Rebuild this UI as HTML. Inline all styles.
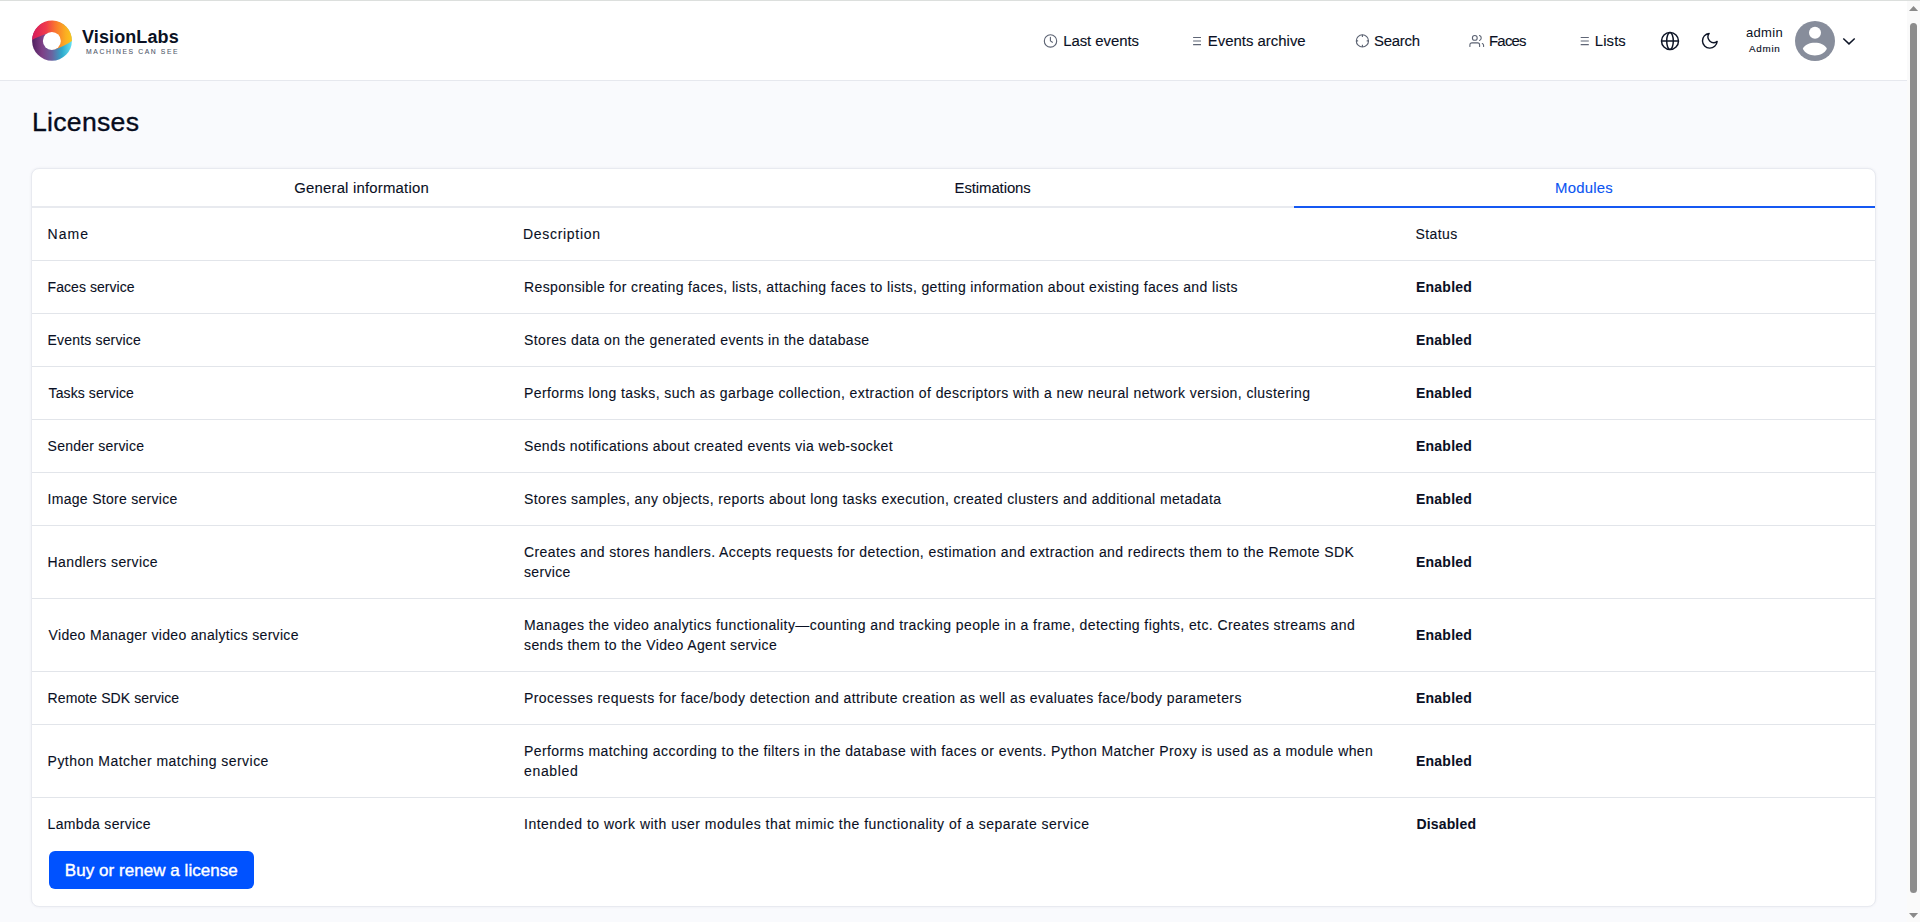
<!DOCTYPE html>
<html><head><meta charset="utf-8">
<style>
html,body{margin:0;padding:0;}
body{width:1920px;height:922px;overflow:hidden;position:relative;background:#f9fafd;font-family:"Liberation Sans",sans-serif;color:#0a1024;}
.a{position:absolute;}
.t{position:absolute;white-space:nowrap;-webkit-text-stroke:0.1px currentColor;}
</style></head><body>
<div class="a" style="left:0;top:0;width:1920px;height:1px;background:#dcdfdd"></div>
<div class="a" style="left:0;top:1px;width:1907px;height:79px;background:#fff;border-bottom:1px solid #e6e8ee"></div>
<svg class="a" style="left:32px;top:20px" width="40" height="42" viewBox="0 0 40 42">
<defs>
<linearGradient id="gt" x1="0" y1="0" x2="1" y2="0"><stop offset="0" stop-color="#d61a5c"/><stop offset="0.35" stop-color="#f03a4b"/><stop offset="0.6" stop-color="#fa7a2d"/><stop offset="0.85" stop-color="#fbb021"/><stop offset="1" stop-color="#fcc41c"/></linearGradient>
<linearGradient id="gb" x1="0" y1="0" x2="1" y2="0"><stop offset="0" stop-color="#4f2160"/><stop offset="0.25" stop-color="#7e3f86"/><stop offset="0.5" stop-color="#6a63a0"/><stop offset="0.75" stop-color="#2ea9cc"/><stop offset="1" stop-color="#66e0f0"/></linearGradient>
</defs>
<circle cx="20" cy="20.8" r="19.9" fill="url(#gb)"/>
<path d="M0.1 19.9 A19.9 19.9 0 0 1 39.9 20.9 C35 24 29 27.5 21.5 29.8 L24 25 L26 15 L14.5 13.7 C9 15.5 4 17.5 0.1 19.9 Z" fill="url(#gt)"/>
<circle cx="19.85" cy="20.95" r="9" fill="#fff"/>
</svg>

<svg class="a" style="left:1043px;top:33px" width="15" height="16" viewBox="0 0 15 16"><circle cx="7.5" cy="7.9" r="6.2" fill="none" stroke="#5b6272" stroke-width="1.1"/><path d="M7.4 4.3V7.9L9.4 9.3" fill="none" stroke="#5b6272" stroke-width="1.1" stroke-linecap="round" stroke-linejoin="round"/></svg>
<svg class="a" style="left:1192px;top:36px" width="10" height="10" viewBox="0 0 10 10"><path d="M1.1 1.5H9M1.1 5H9M1.1 8.6H9" stroke="#5f6676" stroke-width="1.05"/></svg>
<svg class="a" style="left:1355px;top:33px" width="15" height="16" viewBox="0 0 15 16"><circle cx="7.4" cy="7.9" r="6.1" fill="none" stroke="#5b6272" stroke-width="1.1"/><path d="M7.4 1.8V4.1M7.4 11.7V14M1.3 7.9H3.1M11.7 7.9H13.5" stroke="#5b6272" stroke-width="1.1"/></svg>
<svg class="a" style="left:1464px;top:30px" width="24" height="20" viewBox="0 0 24 20"><g fill="none" stroke="#5b6272" stroke-width="1.1" stroke-linecap="round"><circle cx="10.8" cy="7.9" r="2.4"/><path d="M15.5 5.5A2.6 2.6 0 0 1 15.5 10.4"/><path d="M5.9 16.4V14.9A2 2 0 0 1 7.9 12.9H13.6A2 2 0 0 1 15.6 14.9V16.4"/><path d="M18.3 13.5A2.2 2.2 0 0 1 19.6 15.5V16.4"/></g></svg>
<svg class="a" style="left:1580px;top:36px" width="10" height="10" viewBox="0 0 10 10"><path d="M0.7 1.5H8.8M0.7 5H8.8M0.7 8.6H8.8" stroke="#5f6676" stroke-width="1.05"/></svg>
<svg class="a" style="left:1660px;top:31px" width="20" height="20" viewBox="0 0 20 20"><circle cx="10" cy="10" r="8.5" fill="none" stroke="#0d1426" stroke-width="1.5"/><ellipse cx="10" cy="10" rx="3.3" ry="8.5" fill="none" stroke="#0d1426" stroke-width="1.5"/><path d="M1.5 10H18.5" stroke="#0d1426" stroke-width="1.5"/></svg>
<svg class="a" style="left:1700.2px;top:31px" width="19.6" height="19.6" viewBox="0 0 24 24"><path d="M21 12.79A9 9 0 1 1 11.21 3 7 7 0 0 0 21 12.79z" fill="none" stroke="#0d1426" stroke-width="1.75" stroke-linejoin="round"/></svg>
<svg class="a" style="left:1795px;top:21px" width="40" height="40" viewBox="0 0 40 40"><circle cx="20" cy="20" r="20" fill="#878d9b"/><circle cx="20" cy="11.8" r="6" fill="#fff"/><path d="M7.8 27.8C10 23.5 14.5 21.7 19.85 21.7C25.2 21.7 29.7 23.5 31.9 27.8C29.7 32.2 25 34.5 19.85 34.5C14.7 34.5 10 32.2 7.8 27.8Z" fill="#fff"/></svg>
<svg class="a" style="left:1842px;top:36.7px" width="14" height="9" viewBox="0 0 14 9"><path d="M1.3 1.5L7 6.9L12.7 1.5" fill="none" stroke="#0d1426" stroke-width="1.45"/></svg>

<div class="a" style="left:31px;top:168px;width:1843px;height:737px;background:#fff;border:1px solid #e8eaf0;border-radius:8px;box-shadow:0 0 3px rgba(30,40,80,0.06)"></div>
<div class="a" style="left:32px;top:206px;width:1843px;height:2px;background:#e8eaef"></div>
<div class="a" style="left:1294px;top:206px;width:581px;height:2px;background:#1558f2"></div>
<div class="a" style="left:32px;top:260px;width:1843px;height:1px;background:#e2e5ea"></div><div class="a" style="left:32px;top:313px;width:1843px;height:1px;background:#e2e5ea"></div><div class="a" style="left:32px;top:366px;width:1843px;height:1px;background:#e2e5ea"></div><div class="a" style="left:32px;top:419px;width:1843px;height:1px;background:#e2e5ea"></div><div class="a" style="left:32px;top:472px;width:1843px;height:1px;background:#e2e5ea"></div><div class="a" style="left:32px;top:525px;width:1843px;height:1px;background:#e2e5ea"></div><div class="a" style="left:32px;top:598px;width:1843px;height:1px;background:#e2e5ea"></div><div class="a" style="left:32px;top:671px;width:1843px;height:1px;background:#e2e5ea"></div><div class="a" style="left:32px;top:724px;width:1843px;height:1px;background:#e2e5ea"></div><div class="a" style="left:32px;top:797px;width:1843px;height:1px;background:#e2e5ea"></div>
<div class="a" style="left:49px;top:851px;width:205px;height:38px;background:#0052ff;border-radius:6px"></div>
<div class="a" style="left:1907px;top:1px;width:13px;height:921px;background:#fafafa"></div>
<svg class="a" style="left:1909px;top:5.8px" width="10" height="6" viewBox="0 0 10 6"><path d="M4.55 0L9.1 5H0Z" fill="#8a8a8a"/></svg>
<div class="a" style="left:1910px;top:23px;width:7px;height:870px;border-radius:3.5px;background:#8c8c8c"></div>
<svg class="a" style="left:1908.9px;top:912.7px" width="10" height="6" viewBox="0 0 10 6"><path d="M0 0H9.1L4.55 5Z" fill="#8a8a8a"/></svg>
<div class="t" id="logo1" style="left:82.00px;top:25.8px;font-size:18px;line-height:22px;letter-spacing:0.111px;font-weight:700;color:#0a1124;-webkit-text-stroke:0">VisionLabs</div>
<div class="t" id="logo2" style="left:86.00px;top:48px;font-size:6.8px;line-height:8px;letter-spacing:1.600px;color:#535a6c;-webkit-text-stroke:0.1px #535a6c">MACHINES CAN SEE</div>
<div class="t" id="n1" style="left:1063.20px;top:31px;font-size:14.9px;line-height:20px;letter-spacing:-0.040px;color:#0a1024;-webkit-text-stroke:0.12px currentColor">Last events</div>
<div class="t" id="n2" style="left:1207.80px;top:31px;font-size:14.9px;line-height:20px;letter-spacing:0.015px;color:#0a1024;-webkit-text-stroke:0.12px currentColor">Events archive</div>
<div class="t" id="n3" style="left:1374.00px;top:31px;font-size:14.9px;line-height:20px;letter-spacing:-0.240px;color:#0a1024;-webkit-text-stroke:0.12px currentColor">Search</div>
<div class="t" id="n4" style="left:1489.00px;top:31px;font-size:14.9px;line-height:20px;letter-spacing:-0.750px;color:#0a1024;-webkit-text-stroke:0.12px currentColor">Faces</div>
<div class="t" id="n5" style="left:1594.80px;top:31px;font-size:14.9px;line-height:20px;letter-spacing:0.100px;color:#0a1024;-webkit-text-stroke:0.12px currentColor">Lists</div>
<div class="t" id="adm1" style="left:1746.00px;top:25px;font-size:13px;line-height:16px;letter-spacing:0.300px;color:#0a1024;-webkit-text-stroke:0">admin</div>
<div class="t" id="adm2" style="left:1749.00px;top:42.4px;font-size:9.8px;line-height:14px;letter-spacing:0.750px;color:#0a1024;-webkit-text-stroke:0.15px currentColor">Admin</div>
<div class="t" id="h1" style="left:32.00px;top:104px;font-size:26.6px;line-height:36px;letter-spacing:0.286px;color:#060b1c;-webkit-text-stroke:0.35px #060b1c">Licenses</div>
<div class="t" id="tab1" style="left:294.20px;top:178px;font-size:14.9px;line-height:20px;letter-spacing:0.211px;color:#0a1024">General information</div>
<div class="t" id="tab2" style="left:954.60px;top:178px;font-size:14.9px;line-height:20px;letter-spacing:-0.080px;color:#0a1024">Estimations</div>
<div class="t" id="tab3" style="left:1555.00px;top:178px;font-size:14.9px;line-height:20px;letter-spacing:0.233px;color:#0b55f2">Modules</div>
<div class="t" id="th1" style="left:47.60px;top:224px;font-size:14px;line-height:20px;letter-spacing:1.000px">Name</div>
<div class="t" id="th2" style="left:523.00px;top:224px;font-size:14px;line-height:20px;letter-spacing:0.700px">Description</div>
<div class="t" id="th3" style="left:1415.40px;top:224px;font-size:14px;line-height:20px;letter-spacing:0.440px">Status</div>
<div class="t" id="r0n" style="left:47.60px;top:277px;font-size:14px;line-height:20px;letter-spacing:0.050px">Faces service</div>
<div class="t" id="r0d0" style="left:524.00px;top:277px;font-size:14px;line-height:20px;letter-spacing:0.368px">Responsible for creating faces, lists, attaching faces to lists, getting information about existing faces and lists</div>
<div class="t" id="r0s" style="left:1416.00px;top:277px;font-size:14px;line-height:20px;letter-spacing:0.233px;font-weight:700;-webkit-text-stroke:0.05px currentColor">Enabled</div>
<div class="t" id="r1n" style="left:47.60px;top:330px;font-size:14px;line-height:20px;letter-spacing:0.169px">Events service</div>
<div class="t" id="r1d0" style="left:524.00px;top:330px;font-size:14px;line-height:20px;letter-spacing:0.380px">Stores data on the generated events in the database</div>
<div class="t" id="r1s" style="left:1416.00px;top:330px;font-size:14px;line-height:20px;letter-spacing:0.233px;font-weight:700;-webkit-text-stroke:0.05px currentColor">Enabled</div>
<div class="t" id="r2n" style="left:48.60px;top:383px;font-size:14px;line-height:20px;letter-spacing:0.100px">Tasks service</div>
<div class="t" id="r2d0" style="left:524.00px;top:383px;font-size:14px;line-height:20px;letter-spacing:0.420px">Performs long tasks, such as garbage collection, extraction of descriptors with a new neural network version, clustering</div>
<div class="t" id="r2s" style="left:1416.00px;top:383px;font-size:14px;line-height:20px;letter-spacing:0.233px;font-weight:700;-webkit-text-stroke:0.05px currentColor">Enabled</div>
<div class="t" id="r3n" style="left:47.60px;top:436px;font-size:14px;line-height:20px;letter-spacing:0.231px">Sender service</div>
<div class="t" id="r3d0" style="left:524.00px;top:436px;font-size:14px;line-height:20px;letter-spacing:0.370px">Sends notifications about created events via web-socket</div>
<div class="t" id="r3s" style="left:1416.00px;top:436px;font-size:14px;line-height:20px;letter-spacing:0.233px;font-weight:700;-webkit-text-stroke:0.05px currentColor">Enabled</div>
<div class="t" id="r4n" style="left:47.60px;top:489px;font-size:14px;line-height:20px;letter-spacing:0.289px">Image Store service</div>
<div class="t" id="r4d0" style="left:524.00px;top:489px;font-size:14px;line-height:20px;letter-spacing:0.394px">Stores samples, any objects, reports about long tasks execution, created clusters and additional metadata</div>
<div class="t" id="r4s" style="left:1416.00px;top:489px;font-size:14px;line-height:20px;letter-spacing:0.233px;font-weight:700;-webkit-text-stroke:0.05px currentColor">Enabled</div>
<div class="t" id="r5n" style="left:47.60px;top:552px;font-size:14px;line-height:20px;letter-spacing:0.387px">Handlers service</div>
<div class="t" id="r5d0" style="left:524.00px;top:542px;font-size:14px;line-height:20px;letter-spacing:0.418px">Creates and stores handlers. Accepts requests for detection, estimation and extraction and redirects them to the Remote SDK</div>
<div class="t" id="r5d1" style="left:524.00px;top:562px;font-size:14px;line-height:20px;letter-spacing:0.333px">service</div>
<div class="t" id="r5s" style="left:1416.00px;top:552px;font-size:14px;line-height:20px;letter-spacing:0.233px;font-weight:700;-webkit-text-stroke:0.05px currentColor">Enabled</div>
<div class="t" id="r6n" style="left:48.60px;top:625px;font-size:14px;line-height:20px;letter-spacing:0.311px">Video Manager video analytics service</div>
<div class="t" id="r6d0" style="left:524.00px;top:615px;font-size:14px;line-height:20px;letter-spacing:0.411px">Manages the video analytics functionality—counting and tracking people in a frame, detecting fights, etc. Creates streams and</div>
<div class="t" id="r6d1" style="left:524.00px;top:635px;font-size:14px;line-height:20px;letter-spacing:0.389px">sends them to the Video Agent service</div>
<div class="t" id="r6s" style="left:1416.00px;top:625px;font-size:14px;line-height:20px;letter-spacing:0.233px;font-weight:700;-webkit-text-stroke:0.05px currentColor">Enabled</div>
<div class="t" id="r7n" style="left:47.60px;top:688px;font-size:14px;line-height:20px;letter-spacing:0.094px">Remote SDK service</div>
<div class="t" id="r7d0" style="left:524.00px;top:688px;font-size:14px;line-height:20px;letter-spacing:0.425px">Processes requests for face/body detection and attribute creation as well as evaluates face/body parameters</div>
<div class="t" id="r7s" style="left:1416.00px;top:688px;font-size:14px;line-height:20px;letter-spacing:0.233px;font-weight:700;-webkit-text-stroke:0.05px currentColor">Enabled</div>
<div class="t" id="r8n" style="left:47.60px;top:751px;font-size:14px;line-height:20px;letter-spacing:0.460px">Python Matcher matching service</div>
<div class="t" id="r8d0" style="left:524.00px;top:741px;font-size:14px;line-height:20px;letter-spacing:0.416px">Performs matching according to the filters in the database with faces or events. Python Matcher Proxy is used as a module when</div>
<div class="t" id="r8d1" style="left:524.00px;top:761px;font-size:14px;line-height:20px;letter-spacing:0.667px">enabled</div>
<div class="t" id="r8s" style="left:1416.00px;top:751px;font-size:14px;line-height:20px;letter-spacing:0.233px;font-weight:700;-webkit-text-stroke:0.05px currentColor">Enabled</div>
<div class="t" id="r9n" style="left:47.60px;top:814px;font-size:14px;line-height:20px;letter-spacing:0.323px">Lambda service</div>
<div class="t" id="r9d0" style="left:524.00px;top:814px;font-size:14px;line-height:20px;letter-spacing:0.500px">Intended to work with user modules that mimic the functionality of a separate service</div>
<div class="t" id="r9s" style="left:1416.40px;top:814px;font-size:14px;line-height:20px;letter-spacing:0.171px;font-weight:700;-webkit-text-stroke:0.05px currentColor">Disabled</div>
<div class="t" id="btn" style="left:64.80px;top:861px;font-size:17px;line-height:20px;letter-spacing:0.048px;color:#fff;-webkit-text-stroke:0.4px #fff">Buy or renew a license</div>
</body></html>
